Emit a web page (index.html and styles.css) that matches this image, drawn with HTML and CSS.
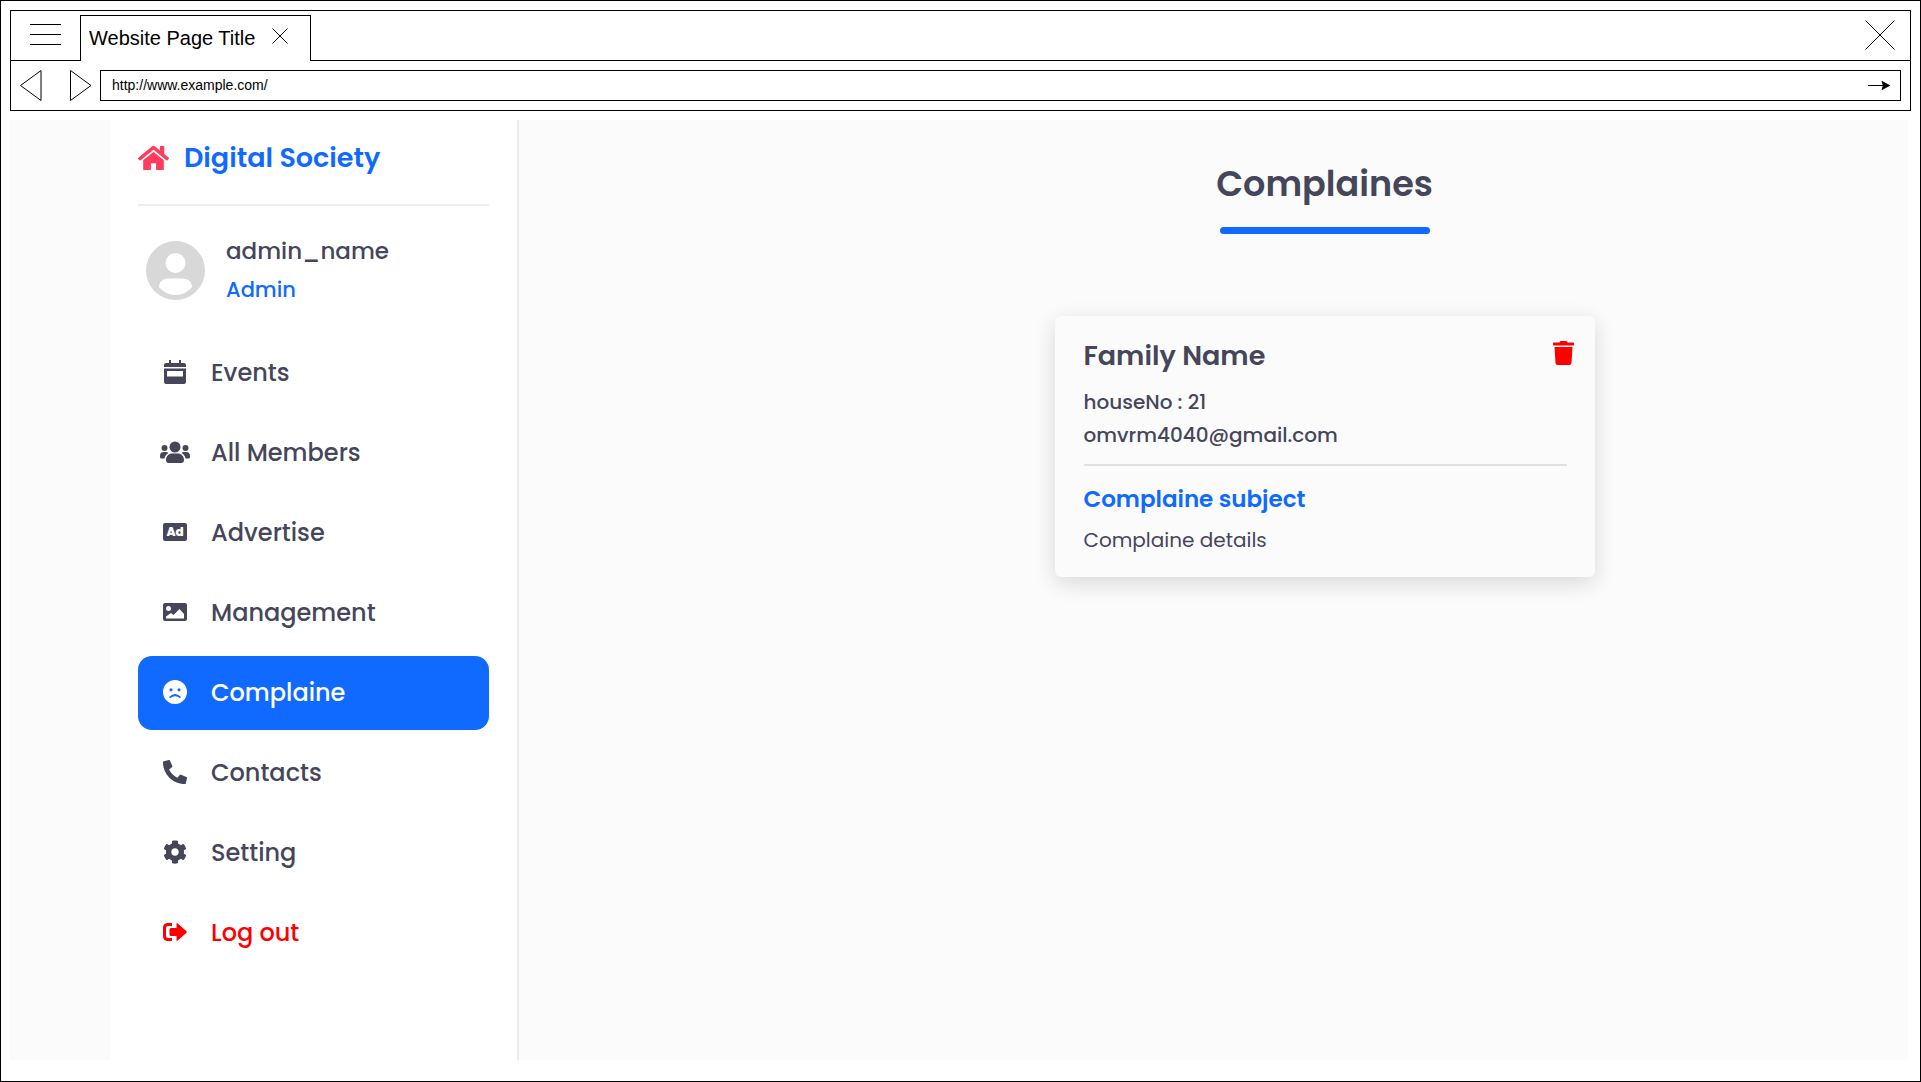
FILE: index.html
```html
<!DOCTYPE html>
<html lang="en">
<head>
<meta charset="utf-8">
<meta name="viewport" content="width=device-width, initial-scale=1">
<title>Digital Society</title>
<link rel="stylesheet" href="styles.css">
</head>
<body>
<div class="window">
  <header class="chrome">
    <div class="tabs">
      <button class="menu-btn" type="button" aria-label="Menu"><svg width="31" height="22" viewBox="0 0 31 22"><path d="M0 .5h31M0 10.500h31M0 20.500h31"/></svg></button>
      <div class="tab">
        <span class="tab-title">Website Page Title</span>
        <button class="tab-close" type="button" aria-label="Close tab"><svg width="16" height="16" viewBox="0 0 16 16"><path d="M.5.5l15 15M15.500.5l-15 15"/></svg></button>
      </div>
      <div class="tab-rest">
        <button class="window-close" type="button" aria-label="Close window"><svg width="30" height="30" viewBox="0 0 30 30"><path d="M.5.5l29 29M29.500.5l-29 29"/></svg></button>
      </div>
    </div>
    <form class="nav-bar">
      <button type="button" aria-label="Back"><svg width="22" height="31" viewBox="0 0 22 31"><path d="M21 .5v30L.5 15.500z"/></svg></button>
      <button class="forward" type="button" aria-label="Forward"><svg width="22" height="31" viewBox="0 0 22 31"><path d="M.5.5v30L21 15.500z"/></svg></button>
      <div class="address">
        <input type="text" aria-label="Address" value="http://www.example.com/">
        <button type="button" aria-label="Go"><svg width="22" height="9" viewBox="0 0 22 9"><path d="M0 4.500h16"/><path d="M14 .5l7.500 4-7.500 4 1.500-4z" fill="#000"/></svg></button>
      </div>
    </form>
  </header>

  <div class="page">
    <aside class="sidebar">
      <a class="brand" href="#">
        <svg width="31" height="28" viewBox="0 0 576 512"><path d="M280.37 148.26L96 300.11V464a16 16 0 0 0 16 16l112.06-.29a16 16 0 0 0 15.92-16V368a16 16 0 0 1 16-16h64a16 16 0 0 1 16 16v95.64a16 16 0 0 0 16 16.05L464 480a16 16 0 0 0 16-16V300L295.67 148.26a12.19 12.19 0 0 0-15.3 0zM571.6 251.47L488 182.56V44.05a12 12 0 0 0-12-12h-56a12 12 0 0 0-12 12v72.61L318.47 43a48 48 0 0 0-61 0L4.34 251.47a12 12 0 0 0-1.6 16.9l25.5 31A12 12 0 0 0 45.15 301l235.22-193.74a12.19 12.19 0 0 1 15.3 0L530.9 301a12 12 0 0 0 16.9-1.6l25.5-31a12 12 0 0 0-1.7-16.93z"/></svg>
        <span>Digital Society</span>
      </a>
      <div class="profile">
        <svg width="59" height="59" viewBox="0 0 59 59"><circle cx="29.500" cy="29.500" r="29.500" fill="#d8d8d8"/><circle cx="29.500" cy="22" r="10" fill="#fff"/><path d="M13 46c0-5 4-8.500 9-8.500h15c5 0 9 3.500 9 8.500-4 5-10 8-16.500 8S17 51 13 46z" fill="#fff"/></svg>
        <div>
          <p class="profile-name">admin_name</p>
          <p class="profile-role">Admin</p>
        </div>
      </div>
      <nav class="menu">
        <a href="#"><svg width="22" height="24" viewBox="0 0 22 24"><path fill-rule="evenodd" d="M5 0h2v3h8V0h2v3h3q2 0 2 2v2H0V5q0-2 2-2h3zM0 8.500h22V22q0 2-2 2H2q-2 0-2-2zM3 11v5.500h16V11z"/></svg><span>Events</span></a>
        <a href="#"><svg width="30" height="22" viewBox="0 0 30 22"><circle cx="15" cy="6" r="5.500"/><circle cx="4.500" cy="7" r="3"/><circle cx="25.500" cy="7" r="3"/><path d="M6 19c0-4 3-6.500 6-6.500h6c3 0 6 2.500 6 6.500 0 2-1 3-2.500 3h-13Q6 22 6 19zM0 15q0-4 4-4h2q1.500 0 2.500 1-3.500 2-4 5.500H1.500Q0 17.500 0 16zM30 15q0-4-4-4h-2q-1.500 0-2.500 1 3.500 2 4 5.500h3q1.500 0 1.500-1.500z"/></svg><span>All Members</span></a>
        <a href="#"><svg width="24" height="18" viewBox="0 0 24 18"><rect width="24" height="18" rx="2"/><text class="ad-text" x="12" y="13" text-anchor="middle">Ad</text></svg><span>Advertise</span></a>
        <a href="#"><svg width="24" height="18" viewBox="0 0 24 18"><path fill-rule="evenodd" d="M2 0h20q2 0 2 2v14q0 2-2 2H2q-2 0-2-2V2Q0 0 2 0zM5.500 3a2.500 2.500 0 1 0 0 5 2.500 2.500 0 0 0 0-5zM3 15.500h18V11l-4.500-5-6 6-2.500-2-5 3.500z"/></svg><span>Management</span></a>
        <a class="active" href="#" aria-current="page"><svg width="24" height="24" viewBox="0 0 24 24"><path fill-rule="evenodd" d="M12 0a12 12 0 1 0 0 24 12 12 0 0 0 0-24zM8 8.200a1.600 1.600 0 1 1 0 3.200 1.600 1.600 0 0 1 0-3.200zM16 8.200a1.600 1.600 0 1 1 0 3.200 1.600 1.600 0 0 1 0-3.200zM7 18.200q-1.300-.5-.5-1.600 5.500-5 11 0 .8 1.100-.5 1.600-5-4-10 0z"/></svg><span>Complaine</span></a>
        <a href="#"><svg width="24" height="24" viewBox="0 0 512 512"><path d="M497.39 361.8l-112-48a24 24 0 0 0-28 6.900l-49.600 60.600A370.660 370.660 0 0 1 130.600 204.110l60.600-49.600a23.940 23.940 0 0 0 6.900-28l-48-112A24.160 24.160 0 0 0 122.600.61l-104 24A24 24 0 0 0 0 48c0 256.500 207.900 464 464 464a24 24 0 0 0 23.400-18.600l24-104a24.290 24.290 0 0 0-14.010-27.600z"/></svg><span>Contacts</span></a>
        <a href="#"><svg width="24" height="24" viewBox="0 0 512 512"><path d="M487.4 315.7l-42.6-24.6c4.3-23.2 4.3-47 0-70.2l42.6-24.6c4.9-2.8 7.1-8.6 5.5-14-11.1-35.6-30-67.8-54.7-94.6-3.8-4.1-10-5.1-14.8-2.3L380.8 110c-17.9-15.4-38.5-27.3-60.8-35.1V25.8c0-5.6-3.9-10.5-9.4-11.700-36.7-8.2-74.3-7.8-109.2 0-5.5 1.2-9.4 6.1-9.4 11.700V75c-22.2 7.900-42.8 19.8-60.8 35.1L88.700 85.500c-4.9-2.8-11-1.9-14.8 2.3-24.7 26.7-43.6 58.9-54.7 94.6-1.7 5.4.6 11.2 5.5 14L67.3 221c-4.3 23.2-4.3 47 0 70.2l-42.6 24.6c-4.9 2.8-7.1 8.6-5.5 14 11.1 35.6 30 67.8 54.7 94.6 3.8 4.1 10 5.1 14.8 2.3l42.6-24.6c17.9 15.4 38.5 27.3 60.8 35.1v49.2c0 5.6 3.9 10.5 9.4 11.7 36.7 8.2 74.3 7.8 109.2 0 5.5-1.2 9.4-6.1 9.4-11.7v-49.2c22.2-7.9 42.8-19.8 60.8-35.1l42.6 24.6c4.9 2.8 11 1.9 14.8-2.3 24.7-26.7 43.6-58.9 54.7-94.6 1.5-5.5-.7-11.3-5.6-14.1zM256 336c-44.1 0-80-35.9-80-80s35.9-80 80-80 80 35.900 80 80-35.900 80-80 80z"/></svg><span>Setting</span></a>
        <a class="logout" href="#"><svg width="24" height="18" viewBox="0 0 24 18"><path d="M9 1.500H5Q1.500 1.500 1.500 5v8q0 3.500 3.500 3.500h4" fill="none" stroke="currentColor" stroke-width="3"/><path d="M8 5h5.500V1q0-1.500 1.200-.5l8.500 7.500q1 1 0 2l-8.500 7.500q-1.200 1-1.200-.5v-4H8q-1.500 0-1.500-1.500v-5Q6.500 5 8 5z"/></svg><span>Log out</span></a>
      </nav>
    </aside>

    <main class="content">
      <h1>Complaines</h1>
      <article class="card">
        <div class="card-head">
          <h2>Family Name</h2>
          <button type="button" aria-label="Delete"><svg width="21" height="24" viewBox="0 0 448 512"><path d="M432 32H312l-9.4-18.7A24 24 0 0 0 281.1 0H166.8a23.72 23.72 0 0 0-21.4 13.3L136 32H16A16 16 0 0 0 0 48v32a16 16 0 0 0 16 16h416a16 16 0 0 0 16-16V48a16 16 0 0 0-16-16zM32 128l21.200 339a48 48 0 0 0 47.900 45h245.800a48 48 0 0 0 47.900-45L416 128z"/></svg></button>
        </div>
        <p class="contact">houseNo : 21</p>
        <p class="contact">omvrm4040@gmail.com</p>
        <hr>
        <h3>Complaine subject</h3>
        <p class="details">Complaine details</p>
      </article>
    </main>
  </div>
</div>
</body>
</html>
```
FILE: styles.css
```css
* { box-sizing: border-box; }
body {
  margin: 0;
  background: #fff;
  color: #45465a;
  font-family: Poppins, Inter, sans-serif;
}
h1, h2, h3, p { margin: 0; }
a { color: inherit; text-decoration: none; }
button {
  display: flex;
  padding: 0;
  border: 0;
  background: none;
  color: inherit;
  cursor: pointer;
}
svg { display: block; flex: none; fill: currentColor; }

.window {
  display: flex;
  flex-direction: column;
  gap: 9px;
  min-height: 100vh;
  padding: 9px 9px 21px;
  border: 1px solid #000;
}

/* Browser chrome */
.chrome {
  border: 1px solid #000;
  color: #000;
  font-family: "Liberation Sans", Arial, sans-serif;
}
.chrome svg { fill: none; stroke: #000; }
.tabs { display: flex; height: 50px; }
.menu-btn {
  align-items: center;
  width: 69px;
  padding: 0 0 2px 19px;
  border-bottom: 1px solid #000;
}
.tab {
  display: flex;
  align-items: center;
  gap: 17px;
  width: 231px;
  margin-top: 4px;
  padding: 0 8px;
  border: 1px solid #000;
  border-bottom: 0;
}
.tab-title { font-size: 20px; }
.tab-close { padding-bottom: 6px; }
.tab-rest {
  display: flex;
  flex: 1;
  align-items: center;
  justify-content: flex-end;
  padding: 0 15px 2px 0;
  border-bottom: 1px solid #000;
}
.nav-bar {
  display: flex;
  align-items: center;
  height: 49px;
  padding: 0 9px;
}
.forward { margin: 0 8px 0 28px; }
.address {
  display: flex;
  flex: 1;
  align-items: center;
  height: 31px;
  padding: 0 10px 0 11px;
  border: 1px solid #000;
}
.address input {
  flex: 1;
  padding: 0 0 2px;
  border: 0;
  outline: 0;
  background: none;
  color: #000;
  font: 14px "Liberation Sans", Arial, sans-serif;
}

/* Page */
.page {
  display: flex;
  flex: 1;
  margin-right: 3px;
  padding-left: 100px;
  background: #fbfbfb;
}
.sidebar {
  flex: none;
  width: 409px;
  padding: 0 28px;
  border-right: 2px solid #ececec;
  background: #fff;
}
.brand {
  display: flex;
  align-items: center;
  gap: 15px;
  height: 86px;
  padding-bottom: 8px;
  border-bottom: 2px solid #eee;
  color: #106aff;
  font-size: 27px;
  font-weight: 600;
}
.brand svg { color: #ff3c5f; }
.profile {
  display: flex;
  align-items: center;
  gap: 21px;
  padding: 25px 8px 27px;
  font-weight: 500;
}
.profile-name { font-size: 23px; line-height: 40px; }
.profile-role { color: #106aff; font-size: 21px; line-height: 38px; }
.menu {
  display: flex;
  flex-direction: column;
  gap: 6px;
  font-size: 24px;
  font-weight: 500;
}
.menu a {
  display: grid;
  grid-template-columns: 30px 1fr;
  align-items: center;
  gap: 21px;
  height: 74px;
  padding: 0 0 2px 22px;
  border-radius: 14px;
}
.menu svg { justify-self: center; }
.menu .active { background: #106aff; color: #fff; }
.menu .logout { color: #f00; }
.ad-text { fill: #fff; font-size: 12px; font-weight: 800; }

.content {
  display: flex;
  flex: 1;
  flex-direction: column;
  align-items: center;
  gap: 82px;
  padding: 40px 0 60px 222px;
}
h1 {
  display: flex;
  flex-direction: column;
  align-items: center;
  gap: 19px;
  font-size: 35px;
  font-weight: 600;
  line-height: 48px;
}
h1::after {
  width: 210px;
  height: 7px;
  border-radius: 4px;
  background: #106aff;
  content: "";
}
.card {
  width: 540px;
  padding: 20px 28px 21px 29px;
  border-radius: 6px;
  background: #fbfbfb;
  box-shadow: 0 6px 22px rgba(0, 0, 0, .14);
}
.card-head {
  display: flex;
  justify-content: space-between;
  margin: 0 -7px 10px 0;
}
.card-head button { align-self: flex-start; margin-top: 5px; color: #f00; }
h2 { font-size: 27px; font-weight: 600; line-height: 40px; }
h3 {
  margin-bottom: 7px;
  color: #106aff;
  font-size: 23px;
  font-weight: 600;
  line-height: 36px;
}
.contact { font-size: 20px; font-weight: 500; line-height: 33px; }
.details { font-size: 20px; line-height: 32px; }
hr { height: 2px; margin: 12px 0 15px; border: 0; background: #e0e0e0; }
```
